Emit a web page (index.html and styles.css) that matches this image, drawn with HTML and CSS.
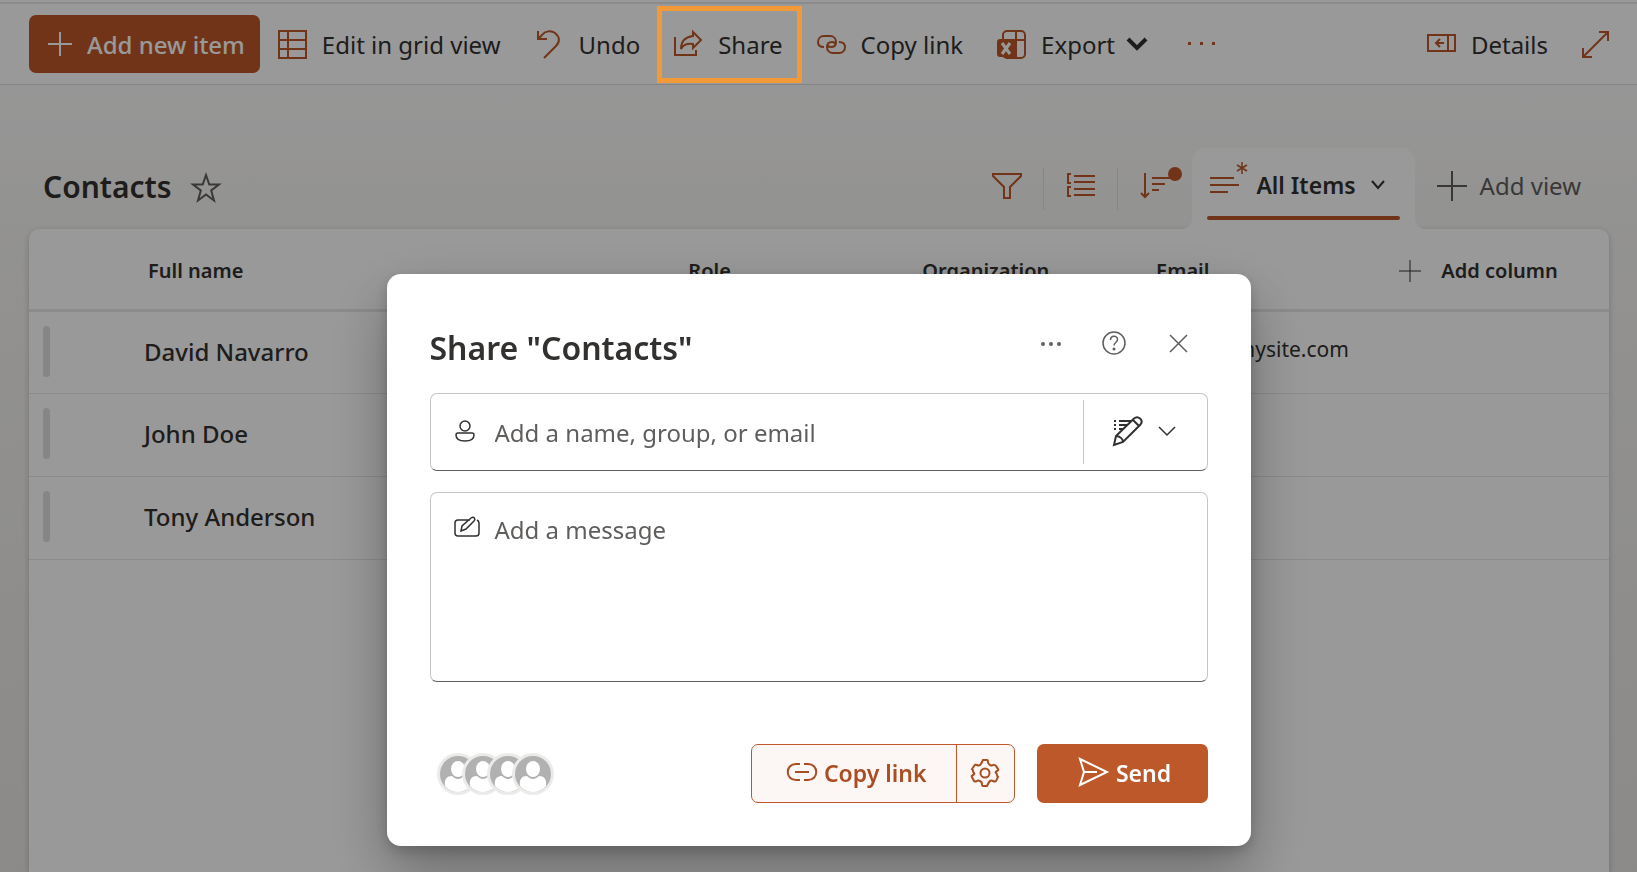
FILE: index.html
```html
<!DOCTYPE html>
<html lang="en">
<head>
    <meta charset="UTF-8">
    <meta name="viewport" content="width=device-width, initial-scale=1.0">
    <title>Contacts</title>
    <link rel="stylesheet" href="styles.css">
</head>
<body>
    <div class="page">
        <header class="toolbar">
            <button class="add-item">
                <svg width="26" height="26" viewBox="0 0 26 26"><path d="M13 1v24M1 13h24" stroke-width="2"/></svg>
                Add new item
            </button>
            <button class="command">
                <svg class="icon" width="29" height="29" viewBox="0 0 29 29"><path d="M1 1h27v27H1zM10 1v27M1 10h27M1 19h27"/></svg>
                Edit in grid view
            </button>
            <button class="command">
                <svg class="icon" width="29" height="29" viewBox="0 0 29 29"><path d="M3 1v8h9M3 9l4-4c3-4 9-5 13-2 5 4 5 9 1 13L9 28"/></svg>
                Undo
            </button>
            <button class="command highlight">
                <svg class="icon" width="29" height="29" viewBox="0 0 29 29"><path d="M1 7v18h21v-5M19 2l8 8-8 8v-4C12 13 9 15 7 19c0-8 4-12 12-13z"/></svg>
                Share
            </button>
            <button class="command">
                <svg class="icon" width="29" height="29" viewBox="0 0 29 29"><path d="M7 17C3 17 1 15 1 12s2-6 6-6h6c4 0 6 3 6 6s-2 5-5 5c-2 0-3-1-3-2M22 12c4 0 6 2 6 5s-2 6-6 6h-6c-4 0-6-3-6-6s2-5 5-5c2 0 3 1 3 2"/></svg>
                Copy link
            </button>
            <button class="command">
                <svg class="icon" width="29" height="29" viewBox="0 0 29 29"><rect x="6" y="1" width="22" height="27" rx="4"/><path d="M19 1v27M6 10h22"/><rect class="solid" x="0" y="9" width="19" height="18" rx="3"/><path class="solid" d="M7 24h12v4H10q-3-1-3-4z"/><path class="cutout" d="M5 13l8 11M13 13L5 24"/></svg>
                Export
                <svg class="chevron-bold" width="22" height="14" viewBox="0 0 22 14"><path d="M2 2l9 9 9-9" stroke-width="4"/></svg>
            </button>
            <button class="command more" aria-label="More">
                <svg class="icon" width="28" height="28" viewBox="0 0 28 28"><path class="solid" d="M0 12h3v3H0zM12 12h3v3h-3zM24 12h3v3h-3z"/></svg>
            </button>
            <button class="command push">
                <svg class="icon" width="29" height="29" viewBox="0 0 29 29"><path d="M1 5h27v16H1zM21 5v16M17 13h-7M13 9l-4 4 4 4"/></svg>
                Details
            </button>
            <button class="command" aria-label="Expand">
                <svg class="icon" width="27" height="27" viewBox="0 0 27 27"><path d="M2 25L25 2M17 1h9v9M1 17v9h9"/></svg>
            </button>
        </header>

        <main class="list">
            <div class="list-head">
                <h1>Contacts</h1>
                <button class="star" aria-label="Favorite">
                    <svg width="30" height="30" viewBox="0 0 30 30"><path d="M15 2l3.300 9.500H28l-7.800 6L23 27.500l-8-6-8 6 2.800-10L2 11.500h9.700z"/></svg>
                </button>
                <div class="views">
                    <button class="tool" aria-label="Filter">
                        <svg class="icon" width="30" height="28" viewBox="0 0 30 28"><path d="M1 1h28v2L18 14v11h-6V14L1 3z"/></svg>
                    </button>
                    <button class="tool" aria-label="Group">
                        <svg class="icon" width="28" height="28" viewBox="0 0 28 28"><path d="M7 3h21M7 9h21M7 16h21M7 22h21M4 1H1v9h3M4 14H1v9h3"/></svg>
                    </button>
                    <button class="tool sort" aria-label="Sort">
                        <svg class="icon" width="42" height="32" viewBox="0 0 42 32"><path d="M5 6v24M1 26l4 4 4-4M12 11h18M12 17h13M12 23h7"/><circle class="solid" cx="35" cy="7" r="7"/></svg>
                    </button>
                    <button class="tab">
                        <svg class="icon" width="39" height="36" viewBox="0 0 39 36"><path d="M0 17h24M0 24h29M0 31h18"/><path d="M32 1v12M27 4l10 6M37 4l-10 6" stroke-width="1.500"/></svg>
                        All Items
                        <svg class="chevron" width="16" height="12" viewBox="0 0 16 12"><path d="M2 2l6 7 6-7" stroke-width="2"/></svg>
                    </button>
                    <button class="add-view">
                        <svg width="30" height="30" viewBox="0 0 30 30"><path d="M15 0v30M0 15h30" stroke-width="2"/></svg>
                        Add view
                    </button>
                </div>
            </div>

            <div class="card">
                <table>
                    <colgroup>
                        <col class="col-mark"><col class="col-name"><col class="col-mid"><col class="col-mid"><col class="col-email"><col>
                    </colgroup>
                    <thead>
                        <tr>
                            <th></th>
                            <th>Full name</th>
                            <th>Role</th>
                            <th>Organization</th>
                            <th>Email</th>
                            <th>
                                <button class="add-column">
                                    <svg width="22" height="22" viewBox="0 0 22 22"><path d="M11 0v22M0 11h22" stroke-width="1"/></svg>
                                    Add column
                                </button>
                            </th>
                        </tr>
                    </thead>
                    <tbody>
                        <tr>
                            <td><span class="mark"></span></td>
                            <td class="name">David Navarro</td>
                            <td></td>
                            <td></td>
                            <td class="email">david@mysite.com</td>
                            <td></td>
                        </tr>
                        <tr>
                            <td><span class="mark"></span></td>
                            <td class="name">John Doe</td>
                            <td></td>
                            <td></td>
                            <td></td>
                            <td></td>
                        </tr>
                        <tr>
                            <td><span class="mark"></span></td>
                            <td class="name">Tony Anderson</td>
                            <td></td>
                            <td></td>
                            <td></td>
                            <td></td>
                        </tr>
                    </tbody>
                </table>
            </div>
        </main>
    </div>

    <div class="overlay">
        <div class="dialog" role="dialog" aria-modal="true" aria-labelledby="dialog-title">
            <div class="dialog-head">
                <h2 id="dialog-title">Share "Contacts"</h2>
                <div class="dialog-tools">
                    <button aria-label="More options">
                        <svg width="24" height="24" viewBox="0 0 24 24"><g fill="#605e5c" stroke="none"><circle cx="5" cy="13" r="2"/><circle cx="13" cy="13" r="2"/><circle cx="21" cy="13" r="2"/></g></svg>
                    </button>
                    <button aria-label="Help">
                        <svg width="24" height="24" viewBox="0 0 24 24"><circle cx="12" cy="12" r="11"/><path d="M8.500 9c0-5 7-5 7-.500 0 3-3.500 3-3.500 6"/><circle cx="12" cy="18" r="1.500" fill="#605e5c" stroke="none"/></svg>
                    </button>
                    <button aria-label="Close">
                        <svg width="24" height="24" viewBox="0 0 24 24"><path d="M4 4l17 17M21 4L4 21"/></svg>
                    </button>
                </div>
            </div>

            <div class="field">
                <label for="people" aria-label="Name, group, or email">
                    <svg width="26" height="26" viewBox="0 0 26 26"><circle cx="11" cy="9" r="5"/><path d="M4 16h14q2 0 2 2c0 4-4 6-9 6s-9-2-9-6q0-2 2-2z"/></svg>
                </label>
                <input id="people" type="text" placeholder="Add a name, group, or email">
                <button class="permission" aria-label="Can edit">
                    <svg width="30" height="30" viewBox="0 0 30 30"><path d="M6 5h12M6 9h8M6 13h5M1 5h2M1 9h2M1 13h2" stroke-width="2"/><path class="pencil" d="M1 29l2-9L21 2.500c4-3.500 10 1.500 6.500 6L10 26zM3 20c4 0 7 3 7 6M20 4l6 6"/></svg>
                    <svg width="18" height="12" viewBox="0 0 18 12"><path d="M1 2l8 8 8-8"/></svg>
                </button>
            </div>

            <div class="field message">
                <label for="message" aria-label="Message">
                    <svg width="26" height="26" viewBox="0 0 26 26"><path d="M16 6H4Q1 6 1 9v10q0 3 3 3h18q3 0 3-3V9q0-2-2-3M7 17l1-5 9-8c3-2 5 1 3 3l-8 8z"/></svg>
                </label>
                <textarea id="message" placeholder="Add a message"></textarea>
            </div>

            <div class="dialog-foot">
                <div class="avatars">
                    <svg class="avatar" viewBox="0 0 42 42"><use href="#person"/></svg>
                    <svg class="avatar" viewBox="0 0 42 42"><use href="#person"/></svg>
                    <svg class="avatar" viewBox="0 0 42 42"><use href="#person"/></svg>
                    <svg class="avatar" viewBox="0 0 42 42">
                        <g id="person">
                            <circle cx="21" cy="21" r="21" fill="#edebe9"/>
                            <circle cx="21" cy="21" r="18" fill="#b1b1b1"/>
                            <path d="M8 33c-1-7 2-10 7-10 4 4 8 4 12 0 5 0 8 3 7 10-7 8-19 8-26 0z" fill="#fff"/>
                            <ellipse cx="21" cy="16" rx="7" ry="8" fill="#fff"/>
                        </g>
                    </svg>
                </div>
                <div class="split">
                    <button class="copy">
                        <svg width="30" height="26" viewBox="0 0 30 26"><path d="M13 4H9c-11 0-11 16 0 16h4M17 4h4c11 0 11 16 0 16h-4M8 12h14" stroke-width="2"/></svg>
                        Copy link
                    </button>
                    <button class="settings" aria-label="Link settings">
                        <svg width="28" height="28" viewBox="0 0 28 28"><circle cx="14" cy="13" r="4.500"/><path d="M12 0h4q1 0 1 2t2 3 3 0 3 1l2 3q1 1-1 2t-1 2 1 2 1 2l-2 4q-1 1-3 0t-3 0-2 3-1 2h-4q-1 0-1-2t-2-3-3 0-3 0l-2-4q-1-1 1-2t1-2-1-2-1-2l2-3q1-2 3-1t3 0 2-3 1-2z"/></svg>
                    </button>
                </div>
                <button class="send">
                    <svg width="30" height="30" viewBox="0 0 30 30"><path d="M1 1l27 13L1 27l4-13zM5 14h13" stroke-width="2"/></svg>
                    Send
                </button>
            </div>
        </div>
    </div>
</body>
</html>
```
FILE: styles.css
```css
* {
    box-sizing: border-box;
}

body {
    margin: 0;
    font-family: "Noto Sans", "Open Sans", sans-serif;
    font-size: 24px;
    color: #323130;
    overflow: hidden;
}

h1, h2 {
    margin: 0;
    font-weight: 600;
}

button {
    display: flex;
    align-items: center;
    padding: 0;
    border: none;
    background: none;
    font: inherit;
    color: inherit;
    white-space: nowrap;
    cursor: pointer;
}

svg {
    display: block;
    flex: none;
    fill: none;
    stroke: currentColor;
    stroke-width: 2;
    overflow: visible;
}

.icon {
    color: #bc5829;
}

.solid {
    fill: #bc5829;
    stroke: none;
}

.cutout {
    stroke: #fff;
    stroke-width: 3;
}

.page {
    display: flex;
    flex-direction: column;
    min-height: 100vh;
    background: linear-gradient(#fff, #f4f3f1 30%, #e9e7e4);
}

/* command bar */

.toolbar {
    display: flex;
    align-items: center;
    height: 83px;
    margin-top: 2px;
    padding: 0 12px 0 29px;
    border-top: 2px solid #e8e8e8;
    border-bottom: 1px solid #dcdcdc;
    background: #fff;
}

.add-item {
    gap: 14px;
    height: 58px;
    padding: 0 15px 0 18px;
    border-radius: 7px;
    background: #bc5829;
    color: #fff;
    font-weight: 500;
}

.command {
    position: relative;
    gap: 15px;
    height: 58px;
    padding: 0 16px 0 18px;
}

.chevron-bold {
    margin-left: -4px;
}

.more {
    padding-left: 24px;
}

.push {
    margin-left: auto;
}

.highlight::after {
    content: "";
    position: absolute;
    inset: -9px -3px -10px 1px;
    border: 5px solid #f19a37;
    z-index: 20;
}

/* list header */

.list {
    display: flex;
    flex-direction: column;
    flex: 1;
    padding: 63px 28px 0 29px;
}

.list-head {
    display: flex;
    align-items: center;
    height: 81px;
    padding: 0 28px 0 14px;
}

h1 {
    padding-bottom: 4px;
    font-size: 30px;
}

.star {
    margin-left: 19px;
    padding-bottom: 2px;
    color: #605e5c;
}

.views {
    display: flex;
    align-items: center;
    align-self: stretch;
    margin-left: auto;
}

.tool {
    justify-content: center;
    width: 74px;
    height: 42px;
    padding-bottom: 4px;
    border-right: 1px solid #e1dfdd;
}

.tool.sort {
    padding: 0 0 12px 12px;
    border: none;
}

.tab {
    position: relative;
    align-self: stretch;
    padding: 0 29px 8px 18px;
    border-radius: 14px 14px 0 0;
    background: #fff;
    font-size: 23px;
    font-weight: 600;
}

.tab .icon {
    margin: 0 7px 12px 0;
}

.tab .chevron {
    margin-left: 14px;
}

.tab::before {
    content: "";
    position: absolute;
    left: 15px;
    right: 15px;
    bottom: 9px;
    height: 4px;
    border-radius: 2px;
    background: #bc5829;
}

/* curved feet where the tab meets the card */
.tab::after {
    content: "";
    position: absolute;
    left: -10px;
    right: -10px;
    bottom: 0;
    height: 10px;
    background:
        radial-gradient(circle at 0 0, transparent 10px, #fff 10px) left / 10px 10px no-repeat,
        radial-gradient(circle at 100% 0, transparent 10px, #fff 10px) right / 10px 10px no-repeat;
}

.add-view {
    gap: 13px;
    margin-left: 22px;
    padding-bottom: 6px;
    color: #605e5c;
}

/* table */

.card {
    flex: 1;
    border-radius: 10px 10px 0 0;
    background: #fff;
    box-shadow: 0 2px 6px rgba(0, 0, 0, 0.2);
}

table {
    width: 100%;
    table-layout: fixed;
    border-collapse: collapse;
}

.col-mark {
    width: 100px;
}

.col-name {
    width: 34.2%;
}

.col-mid {
    width: 14.8%;
}

.col-email {
    width: 15.4%;
}

th {
    height: 81px;
    padding: 4px 0 0 19px;
    border-bottom: 3px solid #e8e8e8;
    font-size: 20px;
    font-weight: 600;
    text-align: left;
}

td {
    height: 83px;
    padding: 0 0 2px 14px;
    border-bottom: 1px solid #e8e8e8;
}

.name {
    padding-left: 15px;
    font-weight: 500;
}

.email {
    padding: 0 0 6px 26px;
    font-size: 21px;
    white-space: nowrap;
}

.mark {
    display: block;
    width: 7px;
    height: 51px;
    border-radius: 4px;
    background: #e1dfdd;
}

.add-column {
    gap: 20px;
}

/* share dialog */

.overlay {
    position: fixed;
    inset: 0;
    display: flex;
    align-items: flex-start;
    justify-content: center;
    padding-top: 274px;
    background: rgba(0, 0, 0, 0.4);
    z-index: 10;
}

.dialog {
    width: 864px;
    max-width: 94%;
    padding: 43px;
    border-radius: 14px;
    background: #fff;
    box-shadow: 0 26px 58px rgba(0, 0, 0, 0.3), 0 5px 14px rgba(0, 0, 0, 0.18);
}

.dialog-head {
    display: flex;
    align-items: flex-start;
    justify-content: space-between;
    height: 76px;
}

h2 {
    padding-top: 7px;
    font-size: 32px;
    line-height: 48px;
}

.dialog-tools {
    display: flex;
    gap: 40px;
    padding: 14px 18px 0 0;
    color: #605e5c;
}

.dialog-tools svg,
.field svg {
    stroke-width: 1.5;
}

.field {
    display: flex;
    height: 78px;
    margin-bottom: 21px;
    padding-left: 23px;
    border: 1px solid #c8c6c4;
    border-bottom-color: #605e5c;
    border-radius: 7px;
}

.field label {
    align-self: center;
    padding-bottom: 5px;
}

.field input,
.field textarea {
    flex: 1;
    min-width: 0;
    padding: 0 15px;
    border: none;
    outline: none;
    background: none;
    font: inherit;
    resize: none;
}

.field ::placeholder {
    color: #605e5c;
    opacity: 1;
}

.permission {
    gap: 15px;
    align-self: center;
    height: 64px;
    padding: 0 31px 2px 29px;
    border-left: 1px solid #c8c6c4;
}

.pencil {
    fill: #fff;
    stroke-width: 2;
}

.message {
    height: 190px;
    margin-bottom: 62px;
}

.field.message label {
    align-self: flex-start;
    padding-top: 21px;
}

.field.message textarea {
    padding-top: 20px;
}

.dialog-foot {
    display: flex;
    align-items: center;
    height: 59px;
    font-size: 23px;
    font-weight: 600;
}

.avatars {
    display: flex;
    margin-right: auto;
    padding-left: 7px;
}

.avatar {
    width: 42px;
    height: 42px;
    margin-right: -17px;
    stroke: none;
}

.split {
    display: flex;
    height: 59px;
    margin-right: 22px;
    border: 1px solid #bc5829;
    border-radius: 7px;
    background: #fcf6f4;
    color: #a94e23;
}

.copy {
    gap: 7px;
    padding: 0 29px 2px 35px;
}

.settings {
    justify-content: center;
    width: 58px;
    border-left: 1px solid #bc5829;
}

.send {
    justify-content: center;
    gap: 7px;
    width: 171px;
    height: 59px;
    padding: 0 0 2px 6px;
    border-radius: 7px;
    background: #bc5829;
    color: #fff;
}
```
